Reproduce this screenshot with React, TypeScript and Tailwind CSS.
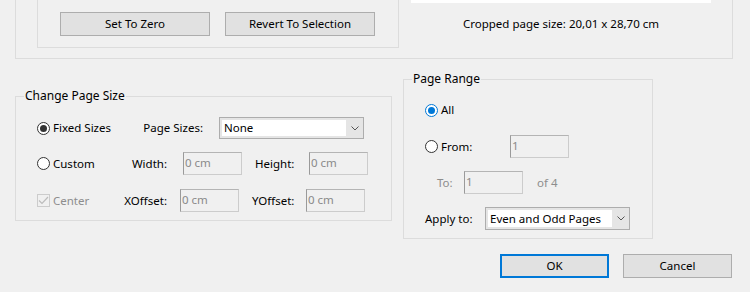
import { ReactNode } from 'react';

const FONT = "font-['Noto_Sans',sans-serif] text-[11.5px]";

function Radio({ checked, accent, label }: { checked?: boolean; accent?: boolean; label: string }) {
  return (
    <span className="flex items-center gap-[3px]">
      <span
        className={`flex h-[13px] w-[13px] items-center justify-center rounded-full border bg-white ${
          accent ? 'border-[#0078d7]' : 'border-[#333333]'
        }`}
      >
        {checked && (
          <span className={`h-[7px] w-[7px] rounded-full ${accent ? 'bg-[#0078d7]' : 'bg-[#333333]'}`} />
        )}
      </span>
      <span>{label}</span>
    </span>
  );
}

function DisabledInput({ value }: { value: string }) {
  return (
    <div className="h-[23px] w-[59px] shrink-0 border border-[#cccccc] border-l-[#9a9a9a] border-t-[#b4b4b4] bg-[#f0f0f0] pl-[1px] leading-[20px] text-[#8a8a8a]">
      {value}
    </div>
  );
}

function Combo({ value, h = 'h-[22px]' }: { value: string; h?: string }) {
  return (
    <div className={`${h} flex w-[145px] shrink-0 border border-[#adadad] bg-[#e5e5e5] p-[2px] pr-0`}>
      <div className="flex flex-1 items-center bg-white pl-[2px]">{value}</div>
      <div className="flex w-[17px] items-center justify-center">
        <svg width="8" height="5" viewBox="0 0 8 5">
          <path d="M0.5 0.5 L4 4 L7.5 0.5" fill="none" stroke="#555" strokeWidth="1" />
        </svg>
      </div>
    </div>
  );
}

function Btn({ children, w }: { children: ReactNode; w: string }) {
  return (
    <div className={`flex h-[24px] ${w} items-center justify-center border border-[#adadad] bg-[#e1e1e1]`}>
      {children}
    </div>
  );
}

function Group({ title, className, children }: { title: string; className: string; children: ReactNode }) {
  return (
    <fieldset className={`border border-[#dcdcdc] ${className}`}>
      <legend className="ml-[8px] px-[1px] text-[12px] leading-[14px]">{title}</legend>
      {children}
    </fieldset>
  );
}

export default function App() {
  return (
    <div className={`${FONT} h-[292px] w-[750px] overflow-hidden bg-[#f0f0f0] text-black`}>
      {/* top section, clipped by the window edge */}
      <div className="ml-[15px] flex h-[59px] w-[718px] border border-t-0 border-[#dcdcdc]">
        <div className="ml-[21px] h-[48px] w-[362px] border border-t-0 border-[#dcdcdc] pl-[22px] pt-[12px]">
          <div className="flex gap-[15px]">
            <Btn w="w-[150px]">Set To Zero</Btn>
            <Btn w="w-[150px]">Revert To Selection</Btn>
          </div>
        </div>
        <div className="ml-[12px] flex w-[300px] flex-col">
          <div className="h-[3px] bg-white" />
          <div className="mt-[12px] text-center">Cropped page size: 20,01 x 28,70 cm</div>
        </div>
      </div>

      <div className="flex">
        <Group title="Change Page Size" className="ml-[15px] mt-[30px] h-[132px] w-[377px]">
          <div className="pl-[21px] pt-[14px]">
            <div className="flex h-[22px] items-center">
              <div className="flex w-[166px] items-center justify-between">
                <Radio checked label="Fixed Sizes" />
                <span>Page Sizes:</span>
              </div>
              <div className="ml-[16px]">
                <Combo value="None" />
              </div>
            </div>
            <div className="mt-[13px] flex h-[23px] items-center">
              <div className="flex w-[130px] items-center justify-between">
                <Radio label="Custom" />
                <span>Width:</span>
              </div>
              <div className="ml-[16px]">
                <DisabledInput value="0 cm" />
              </div>
              <span className="ml-[13px] w-[38px]">Height:</span>
              <div className="ml-[16px]">
                <DisabledInput value="0 cm" />
              </div>
            </div>
            <div className="mt-[14px] flex h-[23px] items-center">
              <div className="flex w-[130px] items-center justify-between">
                <span className="flex items-center gap-[3px] text-[#8d8d8d]">
                  <span className="flex h-[13px] w-[13px] items-center justify-center border border-[#cccccc] bg-[#f0f0f0]">
                    <svg width="11" height="9" viewBox="0 0 11 9">
                      <path d="M1 4.5 L4 7.5 L10 1" fill="none" stroke="#bcbcbc" strokeWidth="1.2" />
                    </svg>
                  </span>
                  Center
                </span>
                <span>XOffset:</span>
              </div>
              <div className="ml-[13px]">
                <DisabledInput value="0 cm" />
              </div>
              <span className="ml-[13px] w-[41px]">YOffset:</span>
              <div className="ml-[13px]">
                <DisabledInput value="0 cm" />
              </div>
            </div>
          </div>
        </Group>

        <Group title="Page Range" className="ml-[11px] mt-[13px] h-[167px] w-[250px]">
          <div className="pl-[21px] pt-[17px]">
            <div className="flex h-[14px] items-center">
              <Radio checked accent label="All" />
            </div>
            <div className="mt-[18px] flex h-[23px] items-center">
              <div className="w-[85px]">
                <Radio label="From:" />
              </div>
              <DisabledInput value="1" />
            </div>
            <div className="mt-[13px] flex h-[23px] items-center">
              <span className="ml-[12px] w-[27px] text-[#8d8d8d]">To:</span>
              <DisabledInput value="1" />
              <span className="ml-[14px] text-[#8d8d8d]">of 4</span>
            </div>
            <div className="mt-[13px] flex h-[23px] items-center">
              <span className="w-[60px]">Apply to:</span>
              <Combo value="Even and Odd Pages" h="h-[23px]" />
            </div>
          </div>
        </Group>
      </div>

      <div className="mt-[15px] flex justify-end gap-[14px] pr-[18px]">
        <div className="flex h-[24px] w-[109px] items-center justify-center border-2 border-[#0078d7] bg-[#e1e1e1]">
          OK
        </div>
        <Btn w="w-[109px]">Cancel</Btn>
      </div>
    </div>
  );
}
